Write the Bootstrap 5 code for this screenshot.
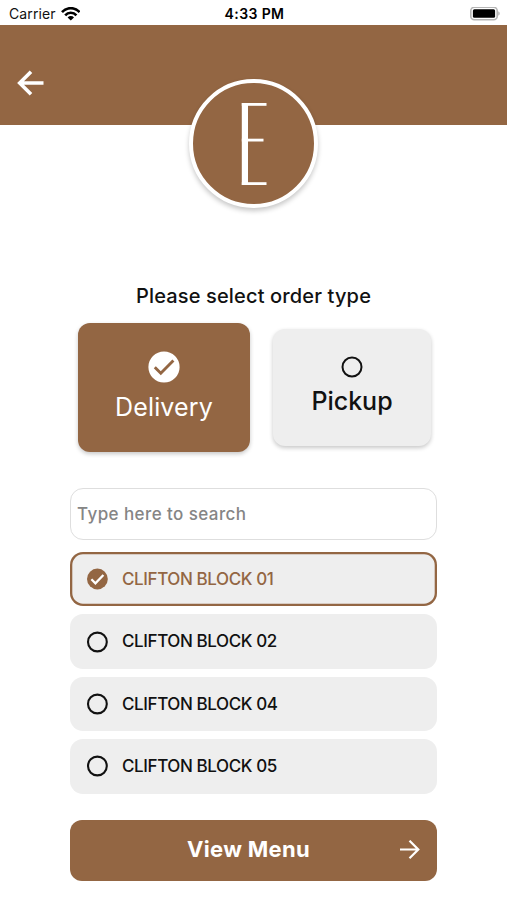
<!DOCTYPE html>
<html lang="en">
<head>
<meta charset="utf-8">
<meta name="viewport" content="width=device-width, initial-scale=1">
<title>Select order type</title>
<link href="https://cdn.jsdelivr.net/npm/bootstrap@5.3.0/dist/css/bootstrap.min.css" rel="stylesheet">
<style>
:root { --brand: #936643; --tile: #eeeeee; }
body { font-family: Inter, "Liberation Sans", sans-serif; color: #111; background: #fff; height: 900px; overflow: hidden; }
svg { display: block; flex: none; }
.status { height: 25px; padding: 3px 7px 0 9px; font-size: 14px; line-height: 22px; color: #111; }
.status > div { flex: 1 1 0; }
.status .lbl { letter-spacing: .12px; }
.status .clock { font-weight: 600; letter-spacing: .4px; color: #000; }
.hero { height: 100px; margin-top: .4px; background: var(--brand); position: relative; }
.back { padding: 44.5px 0 0 17px; background: none; border: 0; }
.brand-logo { position: absolute; left: 189px; top: 53.6px; width: 129.4px; height: 129.4px; border: 4px solid #fff; background: var(--brand); box-shadow: 0 3px 5px rgba(0,0,0,.22); }
.heading { margin: 156.6px 0 0; font-size: 20px; line-height: 28px; font-weight: 500; letter-spacing: .15px; color: #111; }
.types { margin-top: 13px; padding-left: 78px; gap: 23px; height: 129px; }
.type { border: 0; border-radius: 12px; font-size: 25px; font-weight: 500; line-height: 30px; box-shadow: 0 2px 4px rgba(0,0,0,.22); padding: 0; }
.type.on { width: 172px; height: 129px; background: var(--brand); color: #fff; font-weight: 400; letter-spacing: .15px; }
.type.off { width: 158px; height: 117px; background: var(--tile); color: #111; }
.type.on span { margin: 9px 0 1px; }
.type.off span { margin: 8px 0 2px; }
.zone { width: 367px; margin: 36px 0 0 70px; }
.search { height: 52px; border: 1px solid #dedede; border-radius: 13px; padding: 0 6px; font-size: 17px; font-weight: 500; letter-spacing: .42px; color: #111; box-shadow: none; }
.search::placeholder { color: #858585; opacity: 1; }
.areas { gap: 8px; margin-top: 12px; }
.area { height: 54.4px; border: 0; border-radius: 13px !important; background: var(--tile); padding: 0 0 0 16px; gap: 14px; font-size: 17px; font-weight: 500; letter-spacing: -.4px; color: #111; }
.area span { padding-top: 1px; }
.area.chosen { box-shadow: inset 0 0 0 2.3px var(--brand); color: var(--brand); }
.cta { height: 61px; margin-top: 26px; border: 0; border-radius: 12px; background: var(--brand); color: #fff; font-size: 22px; font-weight: 700; letter-spacing: .3px; padding: 0 16px 0 0; }
.cta .cap { padding: 0 0 2px 28px; }
</style>
</head>
<body>
<div class="status d-flex align-items-center">
  <div class="d-flex align-items-center"><span class="lbl">Carrier</span>
    <svg class="ms-1" width="20" height="15" viewBox="0 0 20 15" fill="none" stroke="#000" stroke-width="2.6"><path d="M2 5.1a11.800 11.800 0 0 1 17.600 0M5.200 8.300a7.500 7.500 0 0 1 11.200 0"/><path d="M10.800 13.600 7.600 10.400a4.500 4.500 0 0 1 6.400 0z" fill="#000" stroke="none"/></svg>
  </div>
  <span class="clock">4:33 PM</span>
  <div class="d-flex justify-content-end">
    <svg width="30" height="14" viewBox="0 0 30 14"><rect x=".8" y=".3" width="26.400" height="12.400" rx="3.500" fill="#fff" stroke="#b5b5b5" stroke-width="1.600"/><rect x="2.900" y="2.200" width="22.200" height="8.600" rx="1.500"/><path d="M28.300 4.300c1.800.8 1.800 3.600 0 4.400z" fill="#aaa"/></svg>
  </div>
</div>
<header class="hero">
  <button class="back d-block" aria-label="Back"><svg width="27" height="26" viewBox="0 0 27 26" fill="none" stroke="#fff" stroke-width="3.6"><path d="M26.5 13H3M14 1.7 2.7 13 14 24.3"/></svg></button>
  <div class="brand-logo rounded-circle d-flex align-items-center justify-content-center">
    <svg width="26" height="84" viewBox="0 0 26 84" fill="#fff"><rect x=".8" y="1" width="6.2" height="82"/><rect x=".8" y="1" width="24.7" height="2.8"/><rect x=".8" y="36.7" width="21.7" height="2.8"/><rect x=".8" y="80.2" width="24.7" height="2.8"/></svg>
  </div>
</header>
<main>
  <h1 class="heading text-center">Please select order type</h1>
  <div class="types d-flex align-items-center">
    <button class="type on d-flex flex-column align-items-center justify-content-center">
      <svg width="32" height="32" viewBox="0 0 32 32"><circle cx="16" cy="16" r="15.6" fill="#fff"/><path d="m6.8 16.3 6 6L25.400 9.600" fill="none" stroke="#936643" stroke-width="2.900"/></svg>
      <span>Delivery</span>
    </button>
    <button class="type off d-flex flex-column align-items-center justify-content-center">
      <svg width="22" height="22" viewBox="0 0 22 22"><circle cx="11" cy="11" r="9.500" fill="none" stroke="#111" stroke-width="2"/></svg>
      <span>Pickup</span>
    </button>
  </div>
  <div class="zone">
    <input class="search form-control" placeholder="Type here to search" aria-label="Search">
    <div class="areas list-group">
      <div class="area chosen list-group-item d-flex align-items-center"><svg width="22" height="22" viewBox="0 0 22 22"><circle cx="11.400" cy="11" r="10.400" fill="#936643"/><path d="m5.400 11.300 4 4 8-8.300" fill="none" stroke="#fff" stroke-width="2.300"/></svg><span>CLIFTON BLOCK 01</span></div>
      <div class="area list-group-item d-flex align-items-center"><svg width="22" height="22" viewBox="0 0 22 22"><circle cx="11.400" cy="11" r="9.400" fill="none" stroke="#111" stroke-width="2.100"/></svg><span>CLIFTON BLOCK 02</span></div>
      <div class="area list-group-item d-flex align-items-center"><svg width="22" height="22" viewBox="0 0 22 22"><circle cx="11.400" cy="11" r="9.400" fill="none" stroke="#111" stroke-width="2.100"/></svg><span>CLIFTON BLOCK 04</span></div>
      <div class="area list-group-item d-flex align-items-center"><svg width="22" height="22" viewBox="0 0 22 22"><circle cx="11.400" cy="11" r="9.400" fill="none" stroke="#111" stroke-width="2.100"/></svg><span>CLIFTON BLOCK 05</span></div>
    </div>
    <button class="cta w-100 d-flex align-items-center"><span class="cap flex-grow-1 text-center">View Menu</span><svg width="22" height="20" viewBox="0 0 22 20" fill="none" stroke="#fff" stroke-width="2.200"><path d="M1 9.500h18.500M10.500.7 19.300 9.500l-8.800 8.800"/></svg></button>
  </div>
</main>
<script src="https://cdn.jsdelivr.net/npm/bootstrap@5.3.0/dist/js/bootstrap.bundle.min.js"></script>
</body>
</html>
